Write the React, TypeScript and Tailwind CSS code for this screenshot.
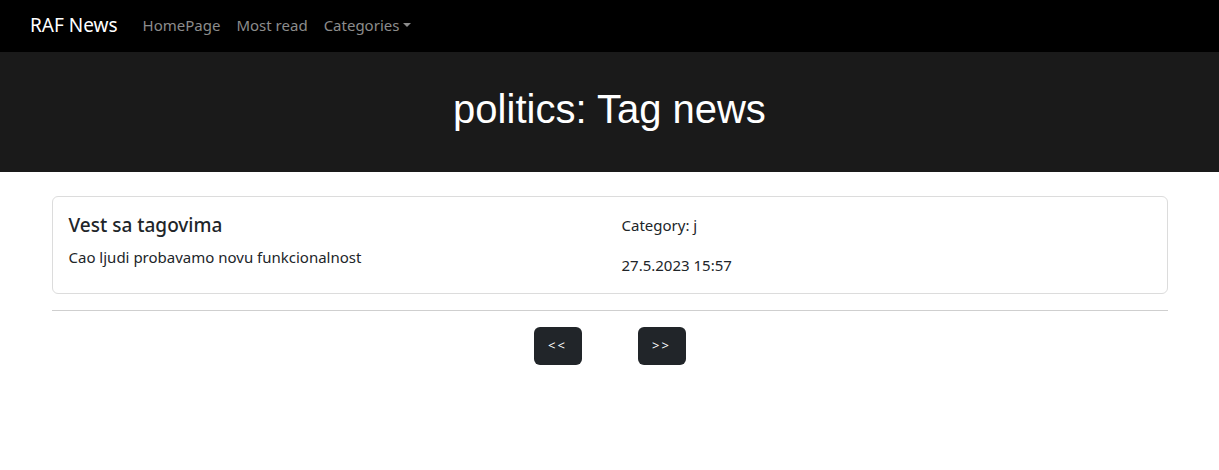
import React from "react";

export default function App() {
  const sans = { fontFamily: '"Noto Sans", "Open Sans", sans-serif' };
  return (
    <div className="min-h-[470px] bg-white text-[#212529]" style={sans}>
      <nav className="flex h-[52px] items-center bg-black px-[30px] pb-[2px]">
        <span className="mr-[25px] text-[19px] leading-[30px] text-white">RAF News</span>
        <div className="flex items-center gap-[16px] text-[15px] text-[#8c8c8c]">
          <span>HomePage</span>
          <span>Most read</span>
          <span className="flex items-center">
            Categories
            <span className="ml-[4px] inline-block h-0 w-0 border-x-[4px] border-t-[4px] border-x-transparent border-t-[#8c8c8c]" />
          </span>
        </div>
      </nav>
      <header className="flex h-[120px] items-center justify-center bg-[#1a1a1a] pb-[7px]">
        <h1
          className="text-[40px] leading-[48px] text-white"
          style={{ fontFamily: '"Liberation Sans", Arial, sans-serif' }}
        >
          politics: Tag news
        </h1>
      </header>
      <main className="mx-auto mt-[24px] w-[1116px]">
        <div className="grid grid-cols-2 rounded-[6px] border border-[#dcdcdc] px-[16px] pt-[16px] pb-[16px]">
          <div className="pr-[12px]">
            <h5 className="text-[19px] font-medium leading-[24px]">Vest sa tagovima</h5>
            <p className="mt-[8px] text-[15px] leading-[24px]">Cao ljudi probavamo novu funkcionalnost</p>
          </div>
          <div className="pl-[12px] text-[15px] leading-[24px]">
            <p>Category: j</p>
            <p className="mt-[16px]">27.5.2023 15:57</p>
          </div>
        </div>
        <hr className="mt-[16px] border-t border-[#cfcfcf]" />
        <div className="mt-[16px] flex justify-center gap-[56px]">
          <button className="h-[38px] w-[48px] rounded-[6px] bg-[#212529] text-[13px] tracking-[2px] text-white">
            &lt;&lt;
          </button>
          <button className="h-[38px] w-[48px] rounded-[6px] bg-[#212529] text-[13px] tracking-[2px] text-white">
            &gt;&gt;
          </button>
        </div>
      </main>
    </div>
  );
}
